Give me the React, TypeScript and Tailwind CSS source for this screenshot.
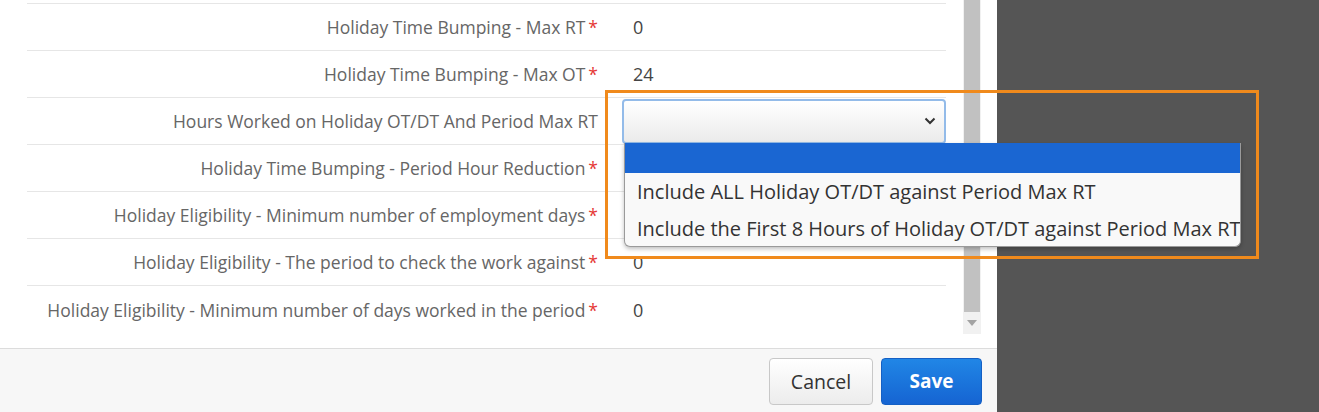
import React from "react";

const rows = [
  { label: "Holiday Time Bumping - Max RT", required: true, value: "0" },
  { label: "Holiday Time Bumping - Max OT", required: true, value: "24" },
  { label: "Hours Worked on Holiday OT/DT And Period Max RT", required: false, select: true },
  { label: "Holiday Time Bumping - Period Hour Reduction", required: true, value: "" },
  { label: "Holiday Eligibility - Minimum number of employment days", required: true, value: "" },
  { label: "Holiday Eligibility - The period to check the work against", required: true, value: "0" },
  { label: "Holiday Eligibility - Minimum number of days worked in the period", required: true, value: "0", last: true },
];

const options = [
  "Include ALL Holiday OT/DT against Period Max RT",
  "Include the First 8 Hours of Holiday OT/DT against Period Max RT",
];

export default function App() {
  return (
    <div
      className="relative w-[1319px] h-[412px] flex bg-[#555555] overflow-hidden"
      style={{ fontFamily: '"Open Sans", "Liberation Sans", sans-serif' }}
    >
      {/* modal panel */}
      <div className="w-[997px] h-full bg-white flex flex-col">
        <div className="h-[349px] flex border-b border-[#dcdcdc]">
          {/* form */}
          <div className="flex-1 pl-[27px] pr-[17px]">
            <div className="h-[4px] border-b border-[#e6e6e6]" />
            {rows.map((row) => (
              <div
                key={row.label}
                className={
                  row.last
                    ? "h-[48px] flex items-center"
                    : "h-[47px] flex items-center border-b border-[#e6e6e6]"
                }
              >
                <div className="w-[583px] pr-[12px] text-right text-[17.5px] text-[#666666] whitespace-nowrap">
                  {row.label}
                  {row.required && <span className="text-[#e53935] ml-[3px]">*</span>}
                </div>
                <div className="flex-1 pl-[12px]">
                  {row.select ? (
                    <div className="h-[45px] w-[324px] rounded-[4px] border-2 border-[#93bbe9] bg-gradient-to-b from-white to-[#ebebeb] flex items-center justify-end pr-[8px]">
                      <svg width="12" height="8" viewBox="0 0 12 8" fill="none">
                        <path d="M1.5 1.5 6 6l4.5-4.5" stroke="#333" strokeWidth="2" />
                      </svg>
                    </div>
                  ) : (
                    <span className="pl-[11px] text-[18px] text-[#444444]">{row.value}</span>
                  )}
                </div>
              </div>
            ))}
          </div>
          {/* scrollbar */}
          <div className="w-[18px] h-[334px] bg-[#f1f1f1] flex flex-col items-center">
            <div className="w-[16px] h-[312px] bg-[#c1c1c1]" />
            <div className="mt-[8px] w-0 h-0 border-l-[5px] border-r-[5px] border-t-[6px] border-l-transparent border-r-transparent border-t-[#a3a3a3]" />
          </div>
          <div className="w-[16px]" />
        </div>
        {/* footer */}
        <div className="flex-1 bg-[#f7f7f7] flex justify-end items-start pt-[9px] pr-[15px] gap-[8px]">
          <button className="w-[104px] h-[47px] rounded-[4px] border border-[#c8c8c8] bg-gradient-to-b from-white to-[#ececec] text-[19.5px] text-[#333333]">
            Cancel
          </button>
          <button className="w-[101px] h-[47px] rounded-[4px] border border-[#1560c4] bg-gradient-to-b from-[#2186e6] to-[#1664d2] text-[19px] font-bold text-white">
            Save
          </button>
        </div>
      </div>

      {/* open dropdown list */}
      <div className="absolute left-[624px] top-[143px] w-[617px] h-[104px] bg-[#f9f9f9] border border-[#9a9a9a] border-t-0 rounded-b-[6px] shadow-[0_2px_4px_rgba(0,0,0,0.25)] overflow-hidden">
        <div className="h-[30px] bg-[#1a66d2]" />
        {options.map((opt) => (
          <div key={opt} className="h-[37px] flex items-center pl-[12px] text-[20px] text-[#333333] whitespace-nowrap">
            {opt}
          </div>
        ))}
      </div>

      {/* highlight box */}
      <div className="absolute left-[605px] top-[90px] w-[654px] h-[169px] border-[3px] border-[#f08a1c] pointer-events-none" />
    </div>
  );
}
